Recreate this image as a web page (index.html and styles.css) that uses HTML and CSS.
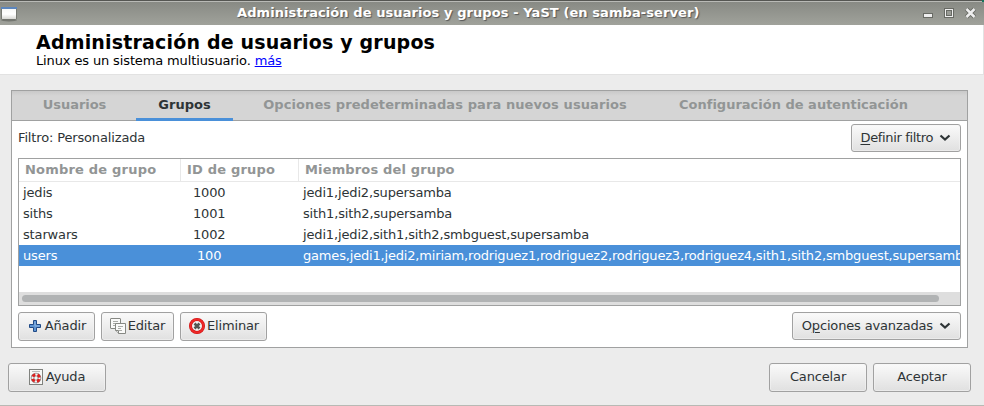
FILE: index.html
```html
<!DOCTYPE html>
<html lang="es">
<head>
<meta charset="utf-8">
<title>Administración de usuarios y grupos</title>
<link rel="stylesheet" href="styles.css">
</head>
<body>
<div class="window">
  <div class="titlebar">
    <svg class="app-icon" width="18" height="16" viewBox="0 0 18 16"><defs><linearGradient id="win" x1="0" y1="0" x2="0" y2="1"><stop offset="0" stop-color="#f4f4f2"/><stop offset=".6" stop-color="#fff"/><stop offset="1" stop-color="#d8d8d4"/></linearGradient></defs><ellipse cx="9" cy="14" rx="8" ry="1.500" fill="#747670"/><rect x="1" y="1" width="16" height="12" fill="#777972"/><rect x="2" y="1" width="14" height="12" fill="url(#win)"/><rect x="1" y="1" width="16" height="2" fill="#5c86bd"/></svg>
    <div class="title">Administración de usuarios y grupos - YaST (en samba-server)</div>
    <svg class="controls" width="56" height="12" viewBox="0 0 56 12"><rect x=".5" y="6.500" width="9" height="4" fill="#eee" stroke="#686a64"/><rect x="21.500" y="1.500" width="9" height="9" fill="#999b95" stroke="#686a64"/><rect x="22.500" y="2.500" width="7" height="7" fill="none" stroke="#eee"/><rect x="23.500" y="3.500" width="5" height="5" fill="#999b95" stroke="#686a64"/><path d="M43.500 2l8 8m0-8l-8 8" stroke="#686a64" stroke-width="4.500"/><path d="M43.500 2l8 8m0-8l-8 8" stroke="#eee" stroke-width="2.500"/></svg>
    <span class="corner"></span>
  </div>
  <header class="header">
    <h1>Administración de usuarios y grupos</h1>
    <p>Linux es un sistema multiusuario. <a href="#">más</a></p>
  </header>
  <main class="panel">
    <nav class="tabs">
      <div class="tab t1">Usuarios</div>
      <div class="tab t2 active">Grupos</div>
      <div class="tab t3">Opciones predeterminadas para nuevos usuarios</div>
      <div class="tab t4">Configuración de autenticación</div>
    </nav>
    <div class="content">
      <div class="filter">
        <span class="filter-label">Filtro: Personalizada</span>
        <button class="btn b-filter"><span><u>D</u>efinir filtro</span><svg width="12" height="8" viewBox="0 0 12 8"><path d="M1.500 1.500L6 5.500l4.500-4" /></svg></button>
      </div>
      <div class="table">
        <div class="row head"><div>Nombre de grupo</div><div>ID de grupo</div><div>Miembros del grupo</div></div>
        <div class="row"><div>jedis</div><div>1000</div><div>jedi1,jedi2,supersamba</div></div>
        <div class="row"><div>siths</div><div>1001</div><div>sith1,sith2,supersamba</div></div>
        <div class="row"><div>starwars</div><div>1002</div><div>jedi1,jedi2,sith1,sith2,smbguest,supersamba</div></div>
        <div class="row selected"><div>users</div><div>&nbsp;100</div><div>games,jedi1,jedi2,miriam,rodriguez1,rodriguez2,rodriguez3,rodriguez4,sith1,sith2,smbguest,supersamba</div></div>
        <div class="scrollbar"><div class="thumb"></div></div>
      </div>
      <div class="actions">
        <button class="btn b-add"><svg width="12" height="12" viewBox="0 0 12 12"><path d="M4.500.5h3v4h4v3h-4v4h-3v-4h-4v-3h4z" fill="#5e94d2" stroke="#204a87" stroke-linejoin="round"/><path d="M6 1.500v4.500h4.500" fill="none" stroke="#8db5e2"/></svg><span>Añadir</span></button>
        <button class="btn b-edit"><svg width="16" height="16" viewBox="0 0 16 16"><g fill="#fafaf9" stroke="#868883"><rect x=".5" y=".5" width="10" height="10" rx=".5"/><path d="M3 3.500h5M3 5.500h3M3 7.500h4" stroke="#aaaca8"/><path d="M5.500 5.500h10v10H8.500l-3-3z"/><path d="M8 8.500h5M8 10.500h3M9 12.500h3" stroke="#aaaca8"/><path d="M5.500 12.500h3v3" fill="#ddd"/></g></svg><span>Editar</span></button>
        <button class="btn b-del"><svg width="16" height="16" viewBox="0 0 16 16"><circle cx="8" cy="8" r="6.500" fill="#f2f2f1" stroke="#cc1010" stroke-width="3"/><circle cx="8" cy="8" r="6.500" fill="none" stroke="#ef2929" stroke-width="2"/><path d="M5.500 5.500l5 5m0-5l-5 5" stroke="#555753" stroke-width="2.600"/></svg><span>Eliminar</span></button>
        <button class="btn b-adv"><span>O<u>p</u>ciones avanzadas</span><svg width="12" height="8" viewBox="0 0 12 8"><path d="M1.500 1.500L6 5.500l4.500-4"/></svg></button>
      </div>
    </div>
  </main>
  <footer class="footer">
    <button class="btn b-help"><svg width="14" height="16" viewBox="0 0 14 16"><rect x=".5" y=".5" width="13" height="15" fill="#f7f7f6" stroke="#80827e"/><path d="M3 2.500h8" stroke="#bbb"/><circle cx="7" cy="9" r="3.500" fill="none" stroke="#888" stroke-width="3.600"/><circle cx="7" cy="9" r="3.500" fill="none" stroke="#f4f4f4" stroke-width="2"/><circle cx="7" cy="9" r="3.500" fill="none" stroke="#dc2020" stroke-width="2.800" stroke-dasharray="3.200 2.298" stroke-dashoffset="-1.150"/></svg><span>Ayuda</span></button>
    <button class="btn b-end b-cancel">Cancelar</button>
    <button class="btn b-end">Aceptar</button>
  </footer>
</div>
</body>
</html>
```
FILE: styles.css
```css
* { box-sizing: border-box; }
body { margin: 0; font: 13px/16px "DejaVu Sans", sans-serif; letter-spacing: -0.15px; color: #2e3436; overflow: hidden; }
.window { width: 984px; height: 406px; background: #ececec; border-bottom: 1px solid #b8b9b4; display: flex; flex-direction: column; }
.titlebar { height: 25px; flex: none; position: relative; display: flex; align-items: center; background: linear-gradient(#555652 0 1px, #b9bab6 1px 2px, #888a84 2px, #a0a29b); }
.app-icon { margin: 2px 0 0; }
.title { flex: 1; padding-left: 219px; font-weight: bold; letter-spacing: 0.08px; color: #fff; text-shadow: 1px 1px 1px #555; white-space: nowrap; }
.controls { margin: 1px 5px 0 0; }
.corner { position: absolute; right: 0; top: 0; width: 2px; height: 2px; background: #17755f; }
.header { height: 50px; flex: none; background: #fff; border-bottom: 1px solid #e2e2e2; border-right: 1px solid #e2e2e2; padding: 6px 0 0 36px; color: #000; }
h1 { margin: 0; font-size: 19px; line-height: 22px; letter-spacing: 0.18px; white-space: nowrap; }
p { margin: 0; line-height: 15px; letter-spacing: -0.13px; }
a { color: #0000ff; }
.panel { margin: 15px 16px 0 11px; height: 258px; flex: none; border: 1px solid #a0a1a1; background: #fff; }
.tabs { height: 30px; background: linear-gradient(#c9c9c9, #d5d5d5 5px); border-bottom: 1px solid #a0a1a1; display: flex; }
.tab { height: 30px; padding-top: 6px; font-weight: bold; letter-spacing: 0.09px; color: #929595; text-align: center; white-space: nowrap; }
.t1 { width: 124px; padding-left: 1px; letter-spacing: -0.05px; }
.t2 { width: 97px; letter-spacing: 0; }
.t3 { width: 424px; }
.t4 { flex: 1; padding-left: 22px; text-align: left; letter-spacing: 0; }
.active { color: #2e3436; border-bottom: 3px solid #4a90d9; }
.content { padding: 3px 6px 0; }
.filter { display: flex; justify-content: space-between; height: 34px; }
.filter-label { padding-top: 6px; }
.btn { font: inherit; letter-spacing: inherit; color: inherit; height: 29px; padding: 0; border: 1px solid #a1a1a1; border-radius: 3px; background: linear-gradient(#fafafa, #e0e0e0); box-shadow: inset 0 0 0 1px #f5f5f580; display: flex; align-items: center; justify-content: center; white-space: nowrap; }
.btn span { padding-bottom: 1px; }
.btn u { text-underline-offset: 2px; }
.b-filter, .b-adv { height: 28px; gap: 6px; justify-content: flex-end; padding-right: 9px; }
.b-filter { width: 110px; letter-spacing: -0.35px; }
.b-filter path, .b-adv path { fill: none; stroke: #2e3436; stroke-width: 2.2; }
.table { height: 148px; border: 1px solid #a0a1a1; overflow: hidden; display: flex; flex-direction: column; }
.row { height: 21px; flex: none; display: grid; grid-template-columns: 162px 118px 1fr; white-space: nowrap; line-height: 21px; }
.row div { padding-left: 4px; min-width: 0; overflow: hidden; }
.row div:nth-child(2) { padding-left: 12px; }
.head { height: 23px; border-bottom: 1px solid #e8e8e8; font-weight: bold; letter-spacing: 0.2px; color: #929595; }
.row.head div { padding-left: 6px; border-right: 1px solid #e8e8e8; }
.row.head div:last-child { border: 0; letter-spacing: 0.15px; }
.selected { background: #4a90d9; color: #fff; letter-spacing: -0.18px; }
.scrollbar { height: 13px; margin-top: auto; background: #dedede; padding: 3px 21px 3px 3px; }
.thumb { height: 7px; border-radius: 4px; background: #b1b3b4; }
.actions { display: flex; gap: 6px; padding-top: 6px; }
.actions svg, .b-help svg { margin-bottom: 1px; }
.b-add { width: 77px; gap: 4px; padding-left: 2px; }
.b-edit { width: 73px; gap: 2px; }
.b-del { width: 87px; gap: 2px; padding-left: 1px; }
.b-adv { width: 169px; margin-left: auto; }
.footer { display: flex; padding: 15px 13px 0 8px; }
.b-help { width: 98px; gap: 3px; }
.b-end { width: 98px; padding-bottom: 1px; }
.b-cancel { margin: 0 6px 0 auto; }
```
